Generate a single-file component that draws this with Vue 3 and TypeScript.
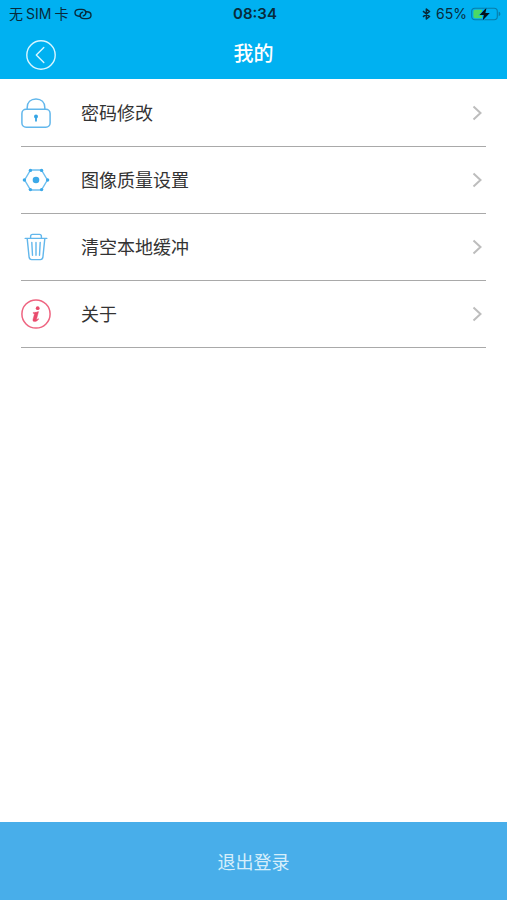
<script setup lang="ts">
import { ref } from 'vue'

type IconName = 'lock' | 'quality' | 'trash' | 'info'

interface MenuItem {
  icon: IconName
  label: string
}

const items = ref<MenuItem[]>([
  { icon: 'lock', label: '密码修改' },
  { icon: 'quality', label: '图像质量设置' },
  { icon: 'trash', label: '清空本地缓冲' },
  { icon: 'info', label: '关于' },
])
</script>

<template>
  <div class="screen">
    <header class="header">
      <div class="status">
        <div class="status-side">
          <span class="carrier"><span>无</span><span>SIM</span><span>卡</span></span>
          <svg width="18" height="12" viewBox="0 0 18 12" aria-hidden="true">
            <g fill="none" stroke="currentColor" stroke-width="1.4" stroke-linecap="round">
              <path d="M6.6 8.2H5.2C2.8 8.2 1 6.8 1 4.8s1.8-3.4 4.2-3.4h2.6c2.3 0 4.1 1.3 4.1 3.3 0 1.5-1 2.6-2.6 3.1" />
              <path d="M11.4 3.8h1.4c2.4 0 4.2 1.4 4.2 3.4s-1.8 3.4-4.2 3.4h-2.6c-2.3 0-4.1-1.3-4.1-3.3 0-1.5 1-2.6 2.6-3.1" />
            </g>
          </svg>
        </div>
        <time class="clock">08:34</time>
        <div class="status-side status-right">
          <svg width="9" height="12" viewBox="0 0 9 12" aria-hidden="true">
            <path d="M1 3.2 7.5 8.5 4.4 11V1l3.1 2.5L1 8.8" fill="none" stroke="currentColor" stroke-width="1.6" stroke-linejoin="round" />
          </svg>
          <span class="percent">65%</span>
          <svg width="30" height="14" viewBox="0 0 30 14" aria-hidden="true">
            <rect x=".7" y="1.2" width="25.6" height="11.6" rx="3.2" fill="none" stroke="#087ca8" stroke-width="1.1" />
            <path d="M27.7 4.8c2.2.6 2.2 3.8 0 4.4z" fill="#087ca8" />
            <path d="M4.2 2.8H11v8.4H4.2a1.8 1.8 0 0 1-1.8-1.8V4.6a1.8 1.8 0 0 1 1.8-1.8z" fill="#4bd865" />
            <path d="M15.6.6 8.6 8h4.2l-1.2 5.6L18.8 6h-4.4z" fill="#06121a" stroke="#00b1f1" stroke-width="1.2" paint-order="stroke" />
          </svg>
        </div>
      </div>
      <div class="navbar">
        <button class="back" type="button" aria-label="返回">
          <svg width="30" height="30" viewBox="0 0 30 30" aria-hidden="true">
            <g fill="none" stroke="#d9f6ff" stroke-width="1.4" stroke-linecap="round" stroke-linejoin="round">
              <circle cx="15" cy="15" r="14.2" />
              <path d="M17.8 7.6 10.3 15l7.5 7.4" />
            </g>
          </svg>
        </button>
        <h1 class="title">我的</h1>
      </div>
    </header>

    <main class="content">
      <ul class="menu">
        <li v-for="item in items" :key="item.icon" class="menu-item">
          <button class="row" type="button">
            <svg width="30" height="30" viewBox="0 0 30 30" aria-hidden="true">
              <g v-if="item.icon === 'lock'" fill="none" stroke="#62b7ec" stroke-width="1.5">
                <rect x=".9" y="11.2" width="28.2" height="18" rx="4.2" />
                <path d="M6.2 11.2V9.5C6.2 4.3 9.7 1 15 1s8.8 3.3 8.8 8.5v1.7" />
                <circle cx="15" cy="18.6" r="2" fill="#36a5e5" stroke="none" />
                <path d="M15 19v4.6" stroke="#36a5e5" stroke-width="1.8" />
              </g>
              <g v-else-if="item.icon === 'quality'">
                <path d="M9.6 5h10.8L26.4 15l-6 10H9.6l-6-10z" fill="none" stroke="#6dbff0" stroke-width="1.4" />
                <g fill="#3ca9e8">
                  <circle cx="15" cy="15" r="3.3" />
                  <circle cx="9.4" cy="5.4" r="1.7" />
                  <circle cx="20.6" cy="5.4" r="1.7" />
                  <circle cx="26.6" cy="15" r="1.7" />
                  <circle cx="20.6" cy="24.6" r="1.7" />
                  <circle cx="9.4" cy="24.6" r="1.7" />
                  <circle cx="3.4" cy="15" r="1.7" />
                </g>
              </g>
              <g v-else-if="item.icon === 'trash'" fill="none" stroke="#62b7ec" stroke-width="1.4" stroke-linecap="round" stroke-linejoin="round">
                <path d="M4.2 6.4h21.6M9.6 6.2V4.4c0-1.3.8-2 2-2h6.8c1.2 0 2 .7 2 2v1.8" />
                <path d="m6.2 6.6 1.9 18.6c.2 1.6 1 2.4 2.5 2.4h8.8c1.5 0 2.3-.8 2.5-2.4l1.9-18.6" />
                <path d="m10.8 10.4.7 12.8M15 10.4v12.8M19.2 10.4l-.7 12.8" />
              </g>
              <g v-else>
                <circle cx="15" cy="15" r="14.1" fill="none" stroke="#ee6480" stroke-width="1.5" />
                <circle cx="16.7" cy="9.2" r="1.9" fill="#e94b6c" />
                <path d="M12.2 13.4c1.8.2 3.2-.1 5.4-.8l-2 7.4c-.2.8.6.8 1.7-.4l.5.5c-1.5 1.9-2.8 2.5-4.2 2.5-1.4 0-2-.9-1.6-2.4l1.3-4.7c.2-.8-.1-1.1-1.3-1.3z" fill="#e94b6c" stroke="#e94b6c" stroke-width=".4" />
              </g>
            </svg>
            <span class="row-label">{{ item.label }}</span>
            <svg class="chevron" width="10" height="16" viewBox="0 0 10 16" aria-hidden="true">
              <path d="m1.5 1.5 7 6.5-7 6.5" fill="none" stroke="#bdbdbd" stroke-width="2" />
            </svg>
          </button>
        </li>
      </ul>
    </main>

    <button class="logout" type="button">退出登录</button>
  </div>
</template>

<style>
body {
  background: #fff;
}
</style>

<style scoped>
.screen {
  display: flex;
  flex-direction: column;
  min-height: 100vh;
  font-family: Inter, "Noto Sans CJK SC", sans-serif;
  color: #333;
}

button {
  margin: 0;
  padding: 0;
  border: 0;
  background: none;
  font: inherit;
  color: inherit;
  cursor: pointer;
}

svg {
  display: block;
  flex: none;
}

.header {
  background: #00b1f1;
}

.status {
  display: grid;
  grid-template-columns: 1fr auto 1fr;
  align-items: center;
  height: 28px;
  padding: 0 6px 0 9px;
  font-size: 14px;
  line-height: 20px;
  color: #082b3b;
}

.status-side {
  display: flex;
  align-items: center;
  gap: 6px;
}

.carrier {
  display: flex;
  gap: 3px;
}

.status-right {
  justify-content: flex-end;
  gap: 5px;
}

.percent {
  margin-right: -1px;
}

.clock {
  font-size: 15px;
  font-weight: 600;
}

.navbar {
  display: grid;
  grid-template-columns: 30px 1fr 30px;
  align-items: center;
  height: 51px;
  padding: 0 26px;
}

.back {
  padding-top: 2px;
}

.title {
  margin: 0;
  font-size: 20px;
  line-height: 28px;
  font-weight: 500;
  text-align: center;
  color: #fff;
}

.content {
  flex: 1;
}

.menu {
  margin: 0;
  padding: 1px 21px 0;
  list-style: none;
}

.menu-item {
  border-bottom: 1px solid #a9a9a9;
}

.row {
  display: flex;
  align-items: center;
  width: 100%;
  height: 66px;
  text-align: left;
}

.row-label {
  flex: 1;
  padding: 2px 0 0 30px;
  font-size: 18px;
  line-height: 26px;
}

.chevron {
  margin-right: 4px;
}

.logout {
  height: 78px;
  background: #48aeea;
  font-size: 18px;
  color: #d6eefb;
}
</style>
